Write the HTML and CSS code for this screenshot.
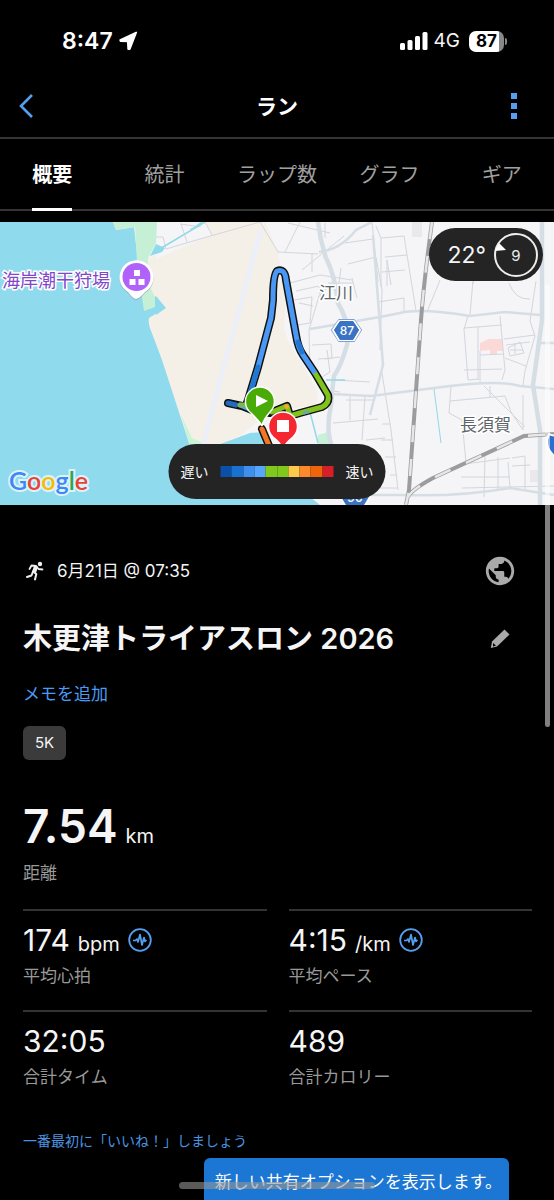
FILE: index.html
```html
<!DOCTYPE html>
<html lang="ja">
<head>
<meta charset="utf-8">
<meta name="viewport" content="width=device-width, initial-scale=1">
<title>ラン</title>
<link rel="stylesheet" href="styles.css">
</head>
<body>
<div class="screen">
  <div class="status">
    <div class="status-side">
      <span class="clock">8:47</span>
      <svg width="19" height="20" viewBox="0 0 19 20" aria-hidden="true"><path d="M17.200 1.500 1.200 9 1.500 10 8.800 10.300 9.200 18 10.800 18Z" fill="#fff" stroke="#fff" stroke-width="1.800" stroke-linejoin="round"/></svg>
    </div>
    <div class="status-side">
      <svg width="28" height="18" viewBox="0 0 28 18" fill="#fff" aria-hidden="true"><rect y="11" width="5" height="7" rx="1.500"/><rect x="7.500" y="8" width="5" height="10" rx="1.500"/><rect x="15" y="4" width="5" height="14" rx="1.500"/><rect x="22.500" width="5" height="18" rx="1.500"/></svg>
      <span class="network">4G</span>
      <span class="battery">87</span>
    </div>
  </div>

  <header class="bar">
    <button class="icon-button" aria-label="戻る"><svg width="16" height="26" viewBox="0 0 16 26"><path d="M14 2 3 13l11 11" fill="none" stroke="#559ff0" stroke-width="2.600"/></svg></button>
    <h1 class="bar-title">ラン</h1>
    <button class="icon-button" aria-label="メニュー"><svg width="8" height="28" viewBox="0 0 8 28" fill="#559ff0"><path d="M1 1h6v6H1zM1 11h6v6H1zM1 21h6v6H1z"/></svg></button>
  </header>

  <nav class="tabs">
    <a class="tab tab-active" href="#summary" aria-current="page">概要</a>
    <a class="tab" href="#stats">統計</a>
    <a class="tab" href="#laps">ラップ数</a>
    <a class="tab" href="#charts">グラフ</a>
    <a class="tab" href="#gear">ギア</a>
  </nav>

  <section class="map" aria-label="コース">
    <svg class="map-canvas" viewBox="0 222 554 283" preserveAspectRatio="xMidYMid slice">
      <rect y="222" width="554" height="283" fill="#f5f4f6"/>
      <path d="M149 262 200 240 191 222H265L278 252 284 280 288 322 304 362 320 382 316 405 270 412 240 436 205 452 189 443 149 323Z" fill="#f4f0e7"/>
      <path d="M157 222H205L213 236 166 249 156 244Z" fill="#f5f4f6"/>
      <path d="M265 222 278 252Q288 300 284 330 288 345 303 365L320 398 325 370 300 310 282 260Z" fill="#f5f4f6"/>
      <path d="M0 222H113L116 230 134 227 138 262 150 296 155 296 165 308 149 318Q148 322 150 328L162 360 189 443 210 505H0Z" fill="#90daee"/>
      <path d="M156 244 150 256 162 252 165 248Z" fill="#90daee"/>
      <path d="M113 222H157L156 243 148 258 149 285 155 297 155 307 144 311 137 262 135 227 116 230Z" fill="#c5f0d5"/>
      <path d="M148 258 156 254 157 296 150 285Z" fill="#f4f0e7"/>
      <path d="M156 296 166 308 156 315Z" fill="#90daee"/>
      <path d="M181 415 192 438 210 446 190 446Z" fill="#c9f4d5"/>
      <path d="M240 436 270 412 318 405 330 420V450L268 430 205 452Z" fill="#f5f4f6"/>
      <path d="M215 446 250 433 264 432 275 450 310 497 320 505H205Z" fill="#90daee"/>
      <path d="M318 435 328 432 330 450 318 448Z" fill="#c9f0d8"/>
      <path d="M480 343 489 339H503V351H497V354H490V350L480 351Z" fill="#fbd9d6"/>
      <path d="M412 222h10v15h-10zM530 470h12v12h-12z" fill="#e9e8eb"/>
      <path d="M261 229 203 444" fill="none" stroke="#eceff8" stroke-width="5"/>
      <g fill="none" stroke="#d3d6de" stroke-width="1">
        <path d="M156 237H163L166 249 200 239 260 222M180 224 195 226M187 242 181 224M205 222 212 235M260 222 278 252 318 254M190 229 201 226M300 222 285 252M288 223 330 233M344 236 302 270M312 254V272M290 283 320 275 352 280M294 300 312 297 310 323 298 325M296 291 319 286 321 302M299 303 313 306M345 243 373 239M348 264 376 257 382 290 380 350M333 282 319 296 309 330 310 370M310 329 377 317M312 345 331 344 332 358 318 359M327 350 330 372 322 377M325 359 340 357M340 392 324 390M335 380 370 382M350 396V420M333 423 378 419M365 396 362 440M372 222 378 282M366 440 385 438M346 400H375M328 283H353M341 268 338 290M352 278 357 298M325 223V238"/>
        <path d="M376 226 381 238V287M381 238 404 236M385 257 407 255M382 272 405 270M387 286V260L391 285M378 302 404 298V312M404 236 416 311M440 280 427 312M473 280 470 315M475 276 473 284M468 316 464 329 468 380 479 379M464 328 502 325M478 327V380M500 316 505 370 502 380M480 351V382M464 370 502 369M480 355 504 354M504 339 535 335M505 358 526 366M506 345 530 342M530 321 535 336 525 371 523 385M536 281 530 321M509 283Q515 300 530 299M451 387 449 413 462 420 466 463M450 401 505 396M490 386V397M505 396 511 412 523 430V395M484 386 525 427M464 464 510 458M461 477H510M462 488 554 486M498 457V490M512 458 525 456V490M512 466 530 465M382 373 391 430 398 490M382 424H390M381 440H393M385 457H396M390 475H397M375 488 397 488M485 455 484 497M508 462 510 488M508 348 520 342 524 353 510 356ZM515 343V354M510 350H523"/>
      </g>
      <g fill="none" stroke="#d6dee5" stroke-width="2.500">
        <path d="M318 222Q320 240 326 258 335 275 338 303 351 325 347 345 341 366 334 376 332 390 331 406 325 430 333 450" stroke-width="4.500"/>
        <path d="M319 252Q340 250 356 230L372 222M310 329 380 317 400 313Q420 308 470 316L505 312 540 315M373 235 383 365 370 415M331 394 371 396 450 386Q500 380 520 386L554 389M370 495H400Q460 497 510 488L554 495"/>
        <path d="M542 222V280L542 320 533 385 540 430V505" stroke-width="4.500"/>
        <path d="M540 343H554"/>
      </g>
      <g fill="none" stroke="#92d9e8" stroke-width="1.500"><path d="M158 250 205 222M191 230 202 222M326 380H345M310 412 318 443"/><path d="M434 389 441 443" stroke-width="1"/></g>
      <g fill="none">
        <path d="M432 222Q424 280 421 320L409 490 406 505M408 497Q411 490 433 478L524 436 554 434" stroke="#9c9c9e" stroke-width="4"/>
        <path d="M432 222Q424 280 421 320L409 490 406 505M408 497Q411 490 433 478L524 436 554 434" stroke="#e7e7e7" stroke-width="2.500" stroke-dasharray="17 17"/>
      </g>

      <g fill="none" stroke-linecap="round" stroke-linejoin="round">
        <path d="M228 403 242 406 252 410 270 413 287 406 290 416 300 413 322 407Q330 403 328 395L315 373 303 355Q298 348 296 335L286 280Q285 268 277 271 273 275 273 300L271 318 258 367 248 400 246 405M262 429 270 448" stroke="#111" stroke-width="8"/>
        <path d="M240 405 252 410 270 411" stroke="#5aa0e8" stroke-width="5"/>
        <path d="M228 403 236 405" stroke="#1f6bc0" stroke-width="5"/>
        <path d="M240 405 246 405" stroke="#78b850" stroke-width="5"/>
        <path d="M272 412 287 406 290 416 300 413 322 407Q330 403 328 395L315 373" stroke="#80c31c" stroke-width="5"/>
        <path d="M315 373 303 355Q298 348 296 335L286 280Q285 268 277 271 273 275 273 300L271 318 258 367 248 400" stroke="#4a98f5" stroke-width="5" stroke-linecap="butt"/>
        <path d="M302 352 298 342M258 367 250 394" stroke="#2277d2" stroke-width="5"/>
        <path d="M304 413 308 412" stroke="#6aa8b0" stroke-width="3"/>
        <path d="M286 406 287 407" stroke="#f4a63a" stroke-width="4"/>
        <path d="M262 429 270 448" stroke="#f17722" stroke-width="5"/>
      </g>

      <g stroke="#fff" stroke-width="1.500">
        <path d="M262 426Q261 423 251 413A14.500 14.500 0 1 1 270 412Q263 420 262 426Z" fill="#48ab07"/>
        <path d="M283 450Q282 444 273 437A14.500 14.500 0 1 1 293 437Q284 444 283 450Z" fill="#f52731"/>
      </g>
      <path d="M256 395 268 401 256 407Z" fill="#fff"/>
      <path d="M277 420h12v12h-12z" fill="#fff"/>

      <path d="M136 300Q133 300 128 293A17 17 0 1 1 145 293Q139 300 136 300Z" fill="#929baa" opacity=".7"/>
      <path d="M136 299Q133 299 128 292A17 17 0 1 1 145 292Q139 299 136 299Z" fill="#fff"/>
      <circle cx="136.500" cy="277" r="14" fill="#af63fb"/>
      <path d="M134 270h6v6h-6zM129.500 279h6v6h-6zM138.500 279h6v6h-6z" fill="#fff"/>

      <g fill="#3b73c4" stroke-linejoin="round">
        <path d="M339 320H354L361 330 354 341H339L332 330Z" stroke="#7f9fd0" stroke-width="2"/>
        <path d="M339 321H354L360 330 354 340H339L333 330Z" stroke="#fff" stroke-width="2"/>
        <path d="M340 321H353L359 330 353 340H340L334 330Z"/>
        <path d="M346 487H364L370 497 364 507H346L340 497Z" stroke="#fff" stroke-width="2"/>
        <path d="M549 434Q554 437 560 434V460Q546 452 547 440Z" fill="#2b6fd0" stroke="#fff" stroke-width="2"/>
      </g>
      <text class="shield" x="347" y="335">87</text>
      <text class="shield" x="355" y="502">90</text>
      <text class="place" x="319" y="299">江川</text>
      <text class="place" x="460" y="431">長須賀</text>
      <text class="poi" x="2" y="287">海岸潮干狩場</text>
      <text class="brand" x="9" y="490"><tspan fill="#4285f4">G</tspan><tspan fill="#e94335">o</tspan><tspan fill="#f9ba05">o</tspan><tspan fill="#4285f4">g</tspan><tspan fill="#34a353">l</tspan><tspan fill="#e94335">e</tspan></text>
    </svg>
    <div class="weather">
      <span class="temperature">22°</span>
      <svg width="46" height="46" viewBox="0 0 46 46" role="img" aria-label="風速 9"><circle cx="23" cy="23" r="21" fill="none" stroke="#eee" stroke-width="2"/><path d="M6 11 13 18 2 19Z" fill="#fff"/><text class="wind" x="23" y="29">9</text></svg>
    </div>
    <div class="legend">
      <span>遅い</span>
      <div class="scale"><i class="s1"></i><i class="s2"></i><i class="s3"></i><i class="s4"></i><i class="s5"></i><i class="s5"></i><i class="s6"></i><i class="s7"></i><i class="s8"></i><i class="s9"></i></div>
      <span>速い</span>
    </div>
  </section>

  <main class="content" id="summary">
    <div class="row meta">
      <svg width="18" height="20" viewBox="0 0 18 20" aria-hidden="true"><circle cx="14" cy="3" r="2.200" fill="#eee"/><path d="M3.500 8 5.500 4.500 10 4.800 12.500 8 16.500 8.500" fill="none" stroke="#eee" stroke-width="1.800" stroke-linecap="round" stroke-linejoin="round"/><path d="M9.500 5.500 7 10.500 10.300 13 9 18.500M7 10.500 5.500 14.500 1 16" fill="none" stroke="#eee" stroke-width="2" stroke-linecap="round" stroke-linejoin="round"/><path d="M8 4.800 12 6 10 12 6.300 11Z" fill="#eee"/></svg>
      <time class="date">6月21日 @ 07:35</time>
      <button class="icon-button end" aria-label="公開範囲"><svg width="34" height="34" viewBox="0 0 24 24" fill="#aaa"><path d="M12 2C6.480 2 2 6.480 2 12s4.480 10 10 10 10-4.480 10-10S17.520 2 12 2zm-1 17.930c-3.950-.49-7-3.850-7-7.930 0-.62.08-1.210.21-1.790L9 15v1c0 1.100.9 2 2 2v1.930zm6.900-2.540c-.26-.81-1-1.390-1.900-1.390h-1v-3c0-.55-.45-1-1-1H8v-2h2c.55 0 1-.45 1-1V7h2c1.100 0 2-.9 2-2v-.41c2.930 1.190 5 4.060 5 7.410 0 2.080-.8 3.970-2.100 5.390z"/></svg></button>
    </div>
    <div class="row headline">
      <h2 class="title">木更津トライアスロン 2026</h2>
      <button class="icon-button end" aria-label="名前を編集"><svg width="20" height="20" viewBox="0 0 20 20"><path d="M14.500 .5 19.500 5.500 7 17.500 .8 19 2 12.500Z" fill="#aaa"/><path d="M3 14 6 16.500 3 17.500Z" fill="#000"/></svg></button>
    </div>
    <a class="memo" href="#memo">メモを追加</a>
    <div><span class="chip">5K</span></div>

    <dl class="stats">
      <div class="stat stat-main"><dd class="value">7.54 <span class="unit">km</span></dd><dt class="label">距離</dt></div>
      <div class="stat"><dd class="value">174 <span class="unit">bpm</span><svg class="pulse" width="24" height="24" viewBox="0 0 24 24" fill="none" stroke="#559ff0"><circle cx="12" cy="12" r="10.800" stroke-width="1.800"/><path d="M5 12.500H7.500L9 11 10 14 12 6.500 14 17 16 9.500 17 13.500 18.500 12" stroke-width="1.700" stroke-linejoin="round"/></svg></dd><dt class="label">平均心拍</dt></div>
      <div class="stat"><dd class="value">4:15 <span class="unit">/km</span><svg class="pulse" width="24" height="24" viewBox="0 0 24 24" fill="none" stroke="#559ff0"><circle cx="12" cy="12" r="10.800" stroke-width="1.800"/><path d="M5 12.500H7.500L9 11 10 14 12 6.500 14 17 16 9.500 17 13.500 18.500 12" stroke-width="1.700" stroke-linejoin="round"/></svg></dd><dt class="label">平均ペース</dt></div>
      <div class="stat"><dd class="value">32:05</dd><dt class="label">合計タイム</dt></div>
      <div class="stat"><dd class="value">489</dd><dt class="label">合計カロリー</dt></div>
    </dl>
    <a class="like" href="#like">一番最初に「いいね！」しましょう</a>
  </main>

  <div class="scroll-thumb"></div>
  <div class="toast" role="status">新しい共有オプションを表示します。</div>
  <div class="home-indicator"></div>
</div>
</body>
</html>
```

FILE: styles.css
```css
* { box-sizing: border-box; }

body {
  margin: 0;
  background: #000;
  color: #f5f5f5;
  font-family: Inter, "Noto Sans CJK JP", sans-serif;
  font-size: 17px;
  line-height: 24px;
}

h1, h2, dl, dd { margin: 0; }
a { text-decoration: none; }
svg { display: block; flex: none; }

.screen {
  position: relative;
  min-height: 100vh;
  overflow: hidden;
}

.status {
  display: flex;
  justify-content: space-between;
  align-items: center;
  height: 74px;
  padding: 8px 50px 0 62px;
}
.status-side { display: flex; align-items: center; gap: 6px; }
.clock { font-size: 23px; font-weight: 600; color: #fff; }
.network { font-size: 19px; }
.battery {
  position: relative;
  width: 35px;
  height: 21px;
  margin-left: 3px;
  border-radius: 7px;
  background: linear-gradient(90deg, #fff 87%, #888 87%);
  color: #000;
  font-size: 17px;
  font-weight: 700;
  line-height: 21px;
  text-align: center;
}
.battery::after {
  content: "";
  position: absolute;
  top: 7px;
  right: -3px;
  width: 2px;
  height: 7px;
  border-radius: 0 2px 2px 0;
  background: #888;
}

.bar {
  display: grid;
  grid-template-columns: 1fr auto 1fr;
  align-items: center;
  height: 65px;
  padding: 0 18px;
  border-bottom: 2px solid #343434;
}
.icon-button {
  display: flex;
  align-items: center;
  justify-content: center;
  padding: 0;
  border: 0;
  background: none;
}
.bar .icon-button { min-width: 44px; justify-content: flex-start; justify-self: start; }
.bar .icon-button:last-child { justify-self: end; justify-content: center; }
.bar-title { padding-top: 3px; font-size: 21px; font-weight: 700; color: #fff; }

.tabs {
  display: grid;
  grid-template-columns: repeat(5, 1fr);
  height: 72px;
  margin: 0 -4px;
  border-bottom: 2px solid #343434;
}
.tab {
  justify-self: center;
  padding-top: 3px;
  color: #a0a0a0;
  font-size: 20px;
  line-height: 66px;
  white-space: nowrap;
}
.tab-active {
  border-bottom: 3px solid #fff;
  color: #fff;
  font-weight: 700;
}

.map { position: relative; margin-top: 11px; }
.map-canvas { width: 100%; height: 283px; }
.place, .poi { paint-order: stroke; stroke: #fff; stroke-width: 3px; }
.place { fill: #5d6469; font-size: 17px; }
.poi { fill: #8048c8; font-size: 18px; }
.shield { fill: #fff; font-size: 12px; font-weight: 500; text-anchor: middle; }
.brand {
  font-family: Lato, sans-serif;
  font-size: 25px;
  font-weight: 600;
  paint-order: stroke;
  stroke: #d9f3fa;
  stroke-width: 4px;
}
.weather, .legend {
  position: absolute;
  display: flex;
  align-items: center;
  border-radius: 28px;
  background: #242424;
}
.weather {
  top: 6px;
  right: 11px;
  gap: 7px;
  height: 53px;
  padding: 0 4px 0 18px;
}
.temperature { font-size: 23px; }
.wind { fill: #eee; font-size: 15px; text-anchor: middle; }
.legend {
  bottom: 6px;
  left: 50%;
  gap: 12px;
  height: 55px;
  padding: 0 12px;
  font-size: 14px;
  white-space: nowrap;
  transform: translateX(-50%);
}
.scale { display: grid; grid-template-columns: repeat(10, 1fr); width: 113px; height: 11px; }
.s1 { background: #0850a8; }
.s2 { background: #1971d2; }
.s3 { background: #3e8fee; }
.s4 { background: #55a6ff; }
.s5 { background: #80c91c; }
.s6 { background: #fdca4b; }
.s7 { background: #fc892c; }
.s8 { background: #ed6508; }
.s9 { background: #d81f27; }

.content { padding: 50px 22px 40px 23px; }
.row { display: flex; align-items: center; }
.end { margin-left: auto; }
.meta { height: 32px; margin-bottom: 32px; padding: 0 15px 0 3px; }
.date { margin-left: 13px; }
.headline { height: 40px; padding-right: 22px; }
.title { font-size: 29px; font-weight: 600; line-height: 40px; }
.memo {
  display: block;
  width: max-content;
  margin: 23px 0 20px;
  color: #4a9bf5;
}
.chip {
  display: inline-block;
  padding: 0 12px;
  border-radius: 6px;
  background: #3b3b3b;
  font-size: 15px;
  line-height: 34px;
}

.stats {
  display: grid;
  grid-template-columns: 1fr 1fr;
  column-gap: 22px;
  margin-top: 37px;
}
.stat {
  height: 101px;
  padding-top: 11px;
  border-top: 2px solid #333;
}
.value {
  display: flex;
  align-items: baseline;
  gap: 8px;
  height: 36px;
  font-size: 30px;
  line-height: 36px;
}
.unit { font-size: 20px; }
.pulse { align-self: center; }
.label { margin-top: 6px; color: #999; }
.stat-main {
  grid-column: 1 / -1;
  height: 112px;
  padding-top: 0;
  border-top: 0;
}
.stat-main .value { height: 58px; font-size: 46px; font-weight: 600; line-height: 58px; }
.stat-main .unit { font-weight: 400; }
.like {
  display: block;
  width: max-content;
  margin-top: 18px;
  color: #4a93e0;
  font-size: 14px;
}

.scroll-thumb {
  position: absolute;
  top: 284px;
  right: 4px;
  width: 5px;
  height: 443px;
  border-radius: 3px;
  background: rgba(255, 255, 255, .5);
}
.toast {
  position: absolute;
  right: 45px;
  bottom: 0;
  height: 42px;
  padding: 0 7px 0 11px;
  border-radius: 6px 6px 0 0;
  background: #1b76d4;
  color: #fff;
  line-height: 48px;
  white-space: nowrap;
}
.home-indicator {
  position: absolute;
  bottom: 11px;
  left: 50%;
  width: 196px;
  height: 7px;
  border-radius: 4px;
  background: rgba(150, 150, 150, .6);
  transform: translateX(-50%);
}
```
